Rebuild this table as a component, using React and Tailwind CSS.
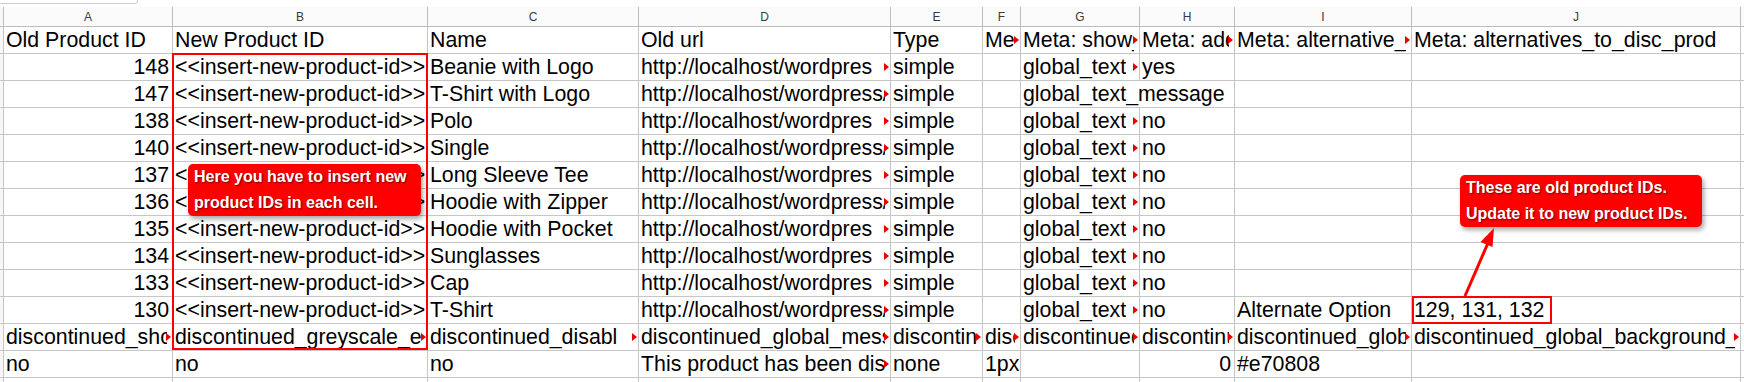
import React from 'react'

// column template: row header stub + A..J + partial K
const GRID = 'grid grid-cols-[4px_169px_255px_211px_252px_92px_38px_119px_95px_177px_329px_1fr]'
const LETTERS = ['A', 'B', 'C', 'D', 'E', 'F', 'G', 'H', 'I', 'J']

const INS = '<<insert-new-product-id>>'
const URL_A = 'http://localhost/wordpres'
const URL_B = 'http://localhost/wordpress/product/item/'

const data = [
  ['148', 'Beanie with Logo', URL_A, 'global_text', 'yes'],
  ['147', 'T-Shirt with Logo', URL_B, 'global_text_message', null],
  ['138', 'Polo', URL_A, 'global_text', 'no'],
  ['140', 'Single', URL_B, 'global_text', 'no'],
  ['137', 'Long Sleeve Tee', URL_A, 'global_text', 'no'],
  ['136', 'Hoodie with Zipper', URL_B, 'global_text', 'no'],
  ['135', 'Hoodie with Pocket', URL_A, 'global_text', 'no'],
  ['134', 'Sunglasses', URL_A, 'global_text', 'no'],
  ['133', 'Cap', URL_A, 'global_text', 'no'],
  ['130', 'T-Shirt', URL_B, 'global_text', 'no'],
]

// little red "text continues" marker at the right edge of a cell
function Tri() {
  return (
    <svg className="absolute right-px top-[9px]" width="5" height="8" viewBox="0 0 5 8">
      <polygon points="0,0 5,4 0,8" fill="#e80000" />
    </svg>
  )
}

function Cell({ t, right, arrow, span }) {
  const pad = right ? 'justify-end pr-[3px]' : arrow ? 'pl-[2px] pr-[5px]' : 'pl-[2px]'
  return (
    <div
      className={`relative h-[27px] border-r border-b border-[#c6c6c6] overflow-hidden whitespace-nowrap flex items-end leading-[1.15] ${pad} ${span ? 'col-span-2' : ''}`}
    >
      <span className={arrow ? 'overflow-hidden min-w-0' : ''}>{t}</span>
      {arrow && <Tri />}
    </div>
  )
}

function Stub() {
  return <div className="h-[27px] border-r border-b border-[#c6c6c6] bg-[#f7f7f7]" />
}

function Tail() {
  return <div className="h-[27px] border-b border-[#c6c6c6]" />
}

function buildRows() {
  const rows = []
  rows.push([
    { t: 'Old Product ID' },
    { t: 'New Product ID' },
    { t: 'Name' },
    { t: 'Old url' },
    { t: 'Type' },
    { t: 'Meta: show', arrow: true },
    { t: 'Meta: show_discontinued', arrow: true },
    { t: 'Meta: add_to_cart', arrow: true },
    { t: 'Meta: alternative_products', arrow: true },
    { t: 'Meta: alternatives_to_disc_prod' },
  ])
  data.forEach(([id, name, url, g, h], i) => {
    const row = [
      { t: id, right: true },
      { t: INS },
      { t: name },
      { t: url, arrow: true },
      { t: 'simple' },
      { t: '' },
    ]
    if (h === null) {
      row.push({ t: g, span: true })
    } else {
      row.push({ t: g, arrow: true })
      row.push({ t: h })
    }
    row.push({ t: i === 9 ? 'Alternate Option' : '' })
    row.push({ t: i === 9 ? '129, 131, 132' : '' })
    rows.push(row)
  })
  rows.push([
    { t: 'discontinued_show_message', arrow: true },
    { t: 'discontinued_greyscale_effect', arrow: true },
    { t: 'discontinued_disabl', arrow: true },
    { t: 'discontinued_global_message', arrow: true },
    { t: 'discontinued_text', arrow: true },
    { t: 'discontinued', arrow: true },
    { t: 'discontinued_global', arrow: true },
    { t: 'discontinued_global', arrow: true },
    { t: 'discontinued_global_text_color', arrow: true },
    { t: 'discontinued_global_background_color', arrow: true },
  ])
  rows.push([
    { t: 'no' },
    { t: 'no' },
    { t: 'no' },
    { t: 'This product has been discontinued', arrow: true },
    { t: 'none' },
    { t: '1px' },
    { t: '' },
    { t: '0', right: true },
    { t: '#e70808' },
    { t: '' },
  ])
  rows.push(Array.from({ length: 10 }, () => ({ t: '' })))
  return rows
}

function Callout({ className, lines }) {
  return (
    <div
      className={`absolute bg-[#ff0000] rounded-[5px] shadow-[2px_3px_5px_rgba(0,0,0,0.35)] pl-[6px] text-white font-bold text-[16px] leading-[26px] [text-shadow:1px_1px_2px_rgba(60,0,0,0.75)] ${className}`}
    >
      {lines.map(l => <div key={l}>{l}</div>)}
    </div>
  )
}

export default function App() {
  const rows = buildRows()
  return (
    <div className="relative w-[1744px] h-[382px] overflow-hidden bg-white text-black text-[21.33px] font-['Liberation_Sans',Arial,sans-serif]">
      {/* top edge of the toolbar area */}
      <div className="h-[7px]">
        <div className="w-[138px] h-[4px] border-b border-r border-[#cfcfcf] rounded-br-[6px]" />
      </div>

      <div className={GRID}>
        {/* column letters */}
        <div className="h-[20px] border-r border-b border-[#bdbdbd] bg-[#f7f7f7]" />
        {LETTERS.map(l => (
          <div key={l} className="h-[20px] border-r border-b border-[#bdbdbd] bg-[#fbfbfb] flex items-center justify-center text-[12px] text-[#3a3a3a]">
            {l}
          </div>
        ))}
        <div className="h-[20px] border-b border-[#bdbdbd] bg-[#fbfbfb]" />

        {rows.map((row, ri) => (
          <React.Fragment key={ri}>
            <Stub />
            {row.map((c, ci) => <Cell key={ci} {...c} />)}
            <Tail />
          </React.Fragment>
        ))}
      </div>

      {/* annotations */}
      <div className="absolute left-[172px] top-[53px] w-[256px] h-[297px] border-2 border-[#ff0000]" />
      <div className="absolute left-[1412px] top-[296px] w-[140px] h-[28px] border-2 border-[#ff0000]" />

      <Callout
        className="left-[188px] top-[164px] w-[233px] h-[52px]"
        lines={['Here you have to insert new', 'product IDs in each cell.']}
      />
      <Callout
        className="left-[1460px] top-[175px] w-[242px] h-[52px]"
        lines={['These are old product IDs.', 'Update it to new product IDs.']}
      />

      <svg className="absolute left-0 top-0 pointer-events-none" width="1744" height="382">
        <line x1="1465" y1="296" x2="1488" y2="243" stroke="#ff0000" strokeWidth="3" />
        <polygon points="1494,228 1492.5,247 1480.5,242" fill="#ff0000" />
      </svg>
    </div>
  )
}
